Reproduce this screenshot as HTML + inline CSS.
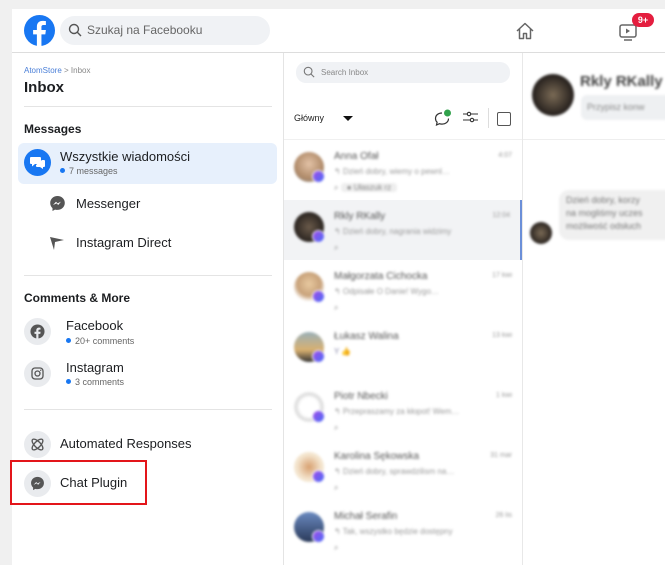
<!DOCTYPE html>
<html><head><meta charset="utf-8"><style>
*{box-sizing:border-box;margin:0;padding:0}
body{width:665px;height:565px;overflow:hidden;background:#f0f0f0;font-family:"Liberation Sans",sans-serif;position:relative}
.abs{position:absolute}
.panel{position:absolute;left:12px;top:9px;width:653px;height:556px;background:#fff}
.top{position:absolute;left:12px;top:9px;width:653px;height:44px;border-bottom:1px solid #ddd;background:#fff}
.blur{filter:blur(1.2px)}
.row{position:absolute;left:284px;width:238px;height:60px}
.av{position:absolute;left:10px;top:12px;width:30px;height:30px;border-radius:50%}
.badge{position:absolute;left:28px;top:30px;width:13px;height:13px;border-radius:50%;background:linear-gradient(135deg,#a04de8,#4a6cf7);border:1.5px solid #fff}
.nm{position:absolute;left:50px;top:11px;font-size:10px;color:#555}
.tm{position:absolute;right:10px;top:12px;font-size:7px;color:#999}
.sn{position:absolute;left:50px;top:27px;font-size:8px;color:#999}
.ic{position:absolute;left:50px;top:43px;font-size:8px;color:#888}
.circ{position:absolute;width:27px;height:27px;border-radius:50%;background:#e9ebee}
.lbl{position:absolute;font-size:13px;color:#1c1e21}
.sub{position:absolute;font-size:9px;color:#666}
.dot{display:inline-block;width:5px;height:5px;border-radius:50%;background:#1877f2;margin-right:4px;vertical-align:1px}
</style></head><body>
<div class="panel"></div>
<div class="top">
 <svg class="abs" style="left:12px;top:6px" width="31" height="31" viewBox="0 0 32 32"><circle cx="16" cy="16" r="16" fill="#1877f2"/><path d="M18 32V20h4l.6-4.5H18v-3c0-1.3.4-2.2 2.2-2.2h2.4V6.3c-.4 0-1.8-.2-3.5-.2-3.5 0-5.8 2.1-5.8 6V15.5H9.4V20h3.9v12z" fill="#fff"/></svg>
 <div class="abs" style="left:48px;top:7px;width:210px;height:29px;border-radius:15px;background:#f0f2f5"></div>
 <svg class="abs" style="left:56px;top:14px" width="14" height="14" viewBox="0 0 14 14"><circle cx="6" cy="6" r="4.5" fill="none" stroke="#555" stroke-width="1.4"/><path d="M9.3 9.3L13 13" stroke="#555" stroke-width="1.4"/></svg>
 <div class="abs" style="left:75px;top:14px;font-size:12px;color:#666">Szukaj na Facebooku</div>
 <svg class="abs" style="left:503px;top:12px" width="20" height="20" viewBox="0 0 20 20"><path d="M2 10L10 2.5 18 10M4.5 8v9.5h4v-5h3v5h4V8" fill="none" stroke="#666" stroke-width="1.5" stroke-linejoin="round"/></svg>
 <svg class="abs" style="left:606px;top:13px" width="20" height="20" viewBox="0 0 20 20"><rect x="2" y="3" width="16" height="12" rx="2" fill="none" stroke="#666" stroke-width="1.5"/><path d="M8 6.5v5l4-2.5z" fill="#666"/><path d="M6 18h8" stroke="#666" stroke-width="1.5"/></svg>
 <div class="abs" style="left:620px;top:4px;width:22px;height:14px;border-radius:7px;background:#e41e3f;color:#fff;font-size:9px;font-weight:bold;text-align:center;line-height:14px">9+</div>
</div>
<div class="abs" style="left:283px;top:53px;width:1px;height:512px;background:#e4e4e4"></div>
<div class="abs" style="left:24px;top:66px;font-size:8px;color:#888"><span style="color:#4a7fd8">AtomStore</span> &gt; Inbox</div>
<div class="abs" style="left:24px;top:79px;font-size:15px;font-weight:bold;color:#1c1e21">Inbox</div>
<div class="abs" style="left:24px;top:106px;width:248px;height:1px;background:#e4e4e4"></div>
<div class="abs" style="left:24px;top:122px;font-size:12px;font-weight:bold;color:#1c1e21">Messages</div>
<div class="abs" style="left:18px;top:143px;width:259px;height:41px;border-radius:6px;background:#e7f0fc"></div>
<div class="abs" style="left:24px;top:149px;width:27px;height:27px;border-radius:50%;background:#1877f2"></div>
<svg class="abs" style="left:29px;top:154px" width="17" height="17" viewBox="0 0 17 17"><path d="M2 3h9a1 1 0 011 1v5a1 1 0 01-1 1H6l-3 2.5V10H2a1 1 0 01-1-1V4a1 1 0 011-1z" fill="#fff"/><path d="M13 6h2a1 1 0 011 1v5a1 1 0 01-1 1h-1v2l-3-2H8a1 1 0 01-1-1v-1" fill="#fff"/></svg>
<div class="lbl" style="left:60px;top:149px">Wszystkie wiadomości</div>
<div class="sub" style="left:60px;top:166px"><span class="dot"></span>7 messages</div>
<svg class="abs" style="left:49px;top:195px" width="17" height="17" viewBox="0 0 17 17"><path d="M8.5 1C4.4 1 1.2 4 1.2 8c0 2.1.9 3.9 2.3 5.1V16l2.5-1.4c.8.2 1.6.3 2.5.3 4.1 0 7.3-3 7.3-7S12.6 1 8.5 1z" fill="#555"/><path d="M4 10l3-3.2 1.6 1.6L12 6.6 9.2 10 7.6 8.4z" fill="#fff"/></svg>
<div class="lbl" style="left:76px;top:196px">Messenger</div>
<svg class="abs" style="left:49px;top:235px" width="16" height="16" viewBox="0 0 16 16"><path d="M1 2l14 3-9 2-1 8z" fill="#555"/></svg>
<div class="lbl" style="left:76px;top:235px">Instagram Direct</div>
<div class="abs" style="left:24px;top:275px;width:248px;height:1px;background:#e4e4e4"></div>
<div class="abs" style="left:24px;top:291px;font-size:12px;font-weight:bold;color:#1c1e21">Comments &amp; More</div>
<div class="circ" style="left:24px;top:318px"></div>
<svg class="abs" style="left:30px;top:324px" width="15" height="15" viewBox="0 0 16 16"><circle cx="8" cy="8" r="7.5" fill="#555"/><path d="M9 16v-5.5h2l.3-2.2H9V7c0-.6.2-1 1-1h1.2V4c-.3 0-.9-.1-1.7-.1C7.8 3.9 6.7 5 6.7 6.8v1.5H4.8v2.2h1.9V16z" fill="#e9ebee"/></svg>
<div class="lbl" style="left:66px;top:318px">Facebook</div>
<div class="sub" style="left:66px;top:336px"><span class="dot"></span>20+ comments</div>
<div class="circ" style="left:24px;top:360px"></div>
<svg class="abs" style="left:31px;top:367px" width="13" height="13" viewBox="0 0 13 13"><rect x="1" y="1" width="11" height="11" rx="3" fill="none" stroke="#555" stroke-width="1.3"/><circle cx="6.5" cy="6.5" r="2.5" fill="none" stroke="#555" stroke-width="1.3"/><circle cx="9.7" cy="3.3" r=".7" fill="#555"/></svg>
<div class="lbl" style="left:66px;top:360px">Instagram</div>
<div class="sub" style="left:66px;top:377px"><span class="dot"></span>3 comments</div>
<div class="abs" style="left:24px;top:409px;width:248px;height:1px;background:#e4e4e4"></div>
<div class="circ" style="left:24px;top:431px"></div>
<svg class="abs" style="left:29px;top:436px" width="17" height="17" viewBox="0 0 17 17" fill="none" stroke="#555" stroke-width="1.3"><ellipse cx="8.5" cy="8.5" rx="7" ry="3" transform="rotate(45 8.5 8.5)"/><ellipse cx="8.5" cy="8.5" rx="7" ry="3" transform="rotate(-45 8.5 8.5)"/></svg>
<div class="lbl" style="left:60px;top:436px">Automated Responses</div>
<div class="circ" style="left:24px;top:470px"></div>
<svg class="abs" style="left:30px;top:476px" width="15" height="15" viewBox="0 0 17 17"><path d="M8.5 1C4.4 1 1.2 4 1.2 8c0 2.1.9 3.9 2.3 5.1V16l2.5-1.4c.8.2 1.6.3 2.5.3 4.1 0 7.3-3 7.3-7S12.6 1 8.5 1z" fill="#555"/><path d="M4 10l3-3.2 1.6 1.6L12 6.6 9.2 10 7.6 8.4z" fill="#e9ebee"/></svg>
<div class="lbl" style="left:60px;top:475px">Chat Plugin</div>
<div class="abs" style="left:10px;top:460px;width:137px;height:45px;border:2px solid #e3151a"></div>
<div class="abs" style="left:522px;top:53px;width:1px;height:512px;background:#e8e8e8"></div>
<div class="abs" style="left:296px;top:62px;width:214px;height:21px;border-radius:10px;background:#f0f2f5"></div>
<svg class="abs" style="left:303px;top:66px" width="12" height="12" viewBox="0 0 14 14"><circle cx="6" cy="6" r="4.5" fill="none" stroke="#777" stroke-width="1.3"/><path d="M9.3 9.3L13 13" stroke="#777" stroke-width="1.3"/></svg>
<div class="abs" style="left:321px;top:68px;font-size:8px;color:#888">Search Inbox</div>
<div class="abs" style="left:294px;top:113px;font-size:9px;color:#222">Główny</div>
<div class="abs" style="left:343px;top:116px;width:0;height:0;border-left:5px solid transparent;border-right:5px solid transparent;border-top:5px solid #111"></div>
<svg class="abs" style="left:433px;top:108px" width="20" height="20" viewBox="0 0 20 20"><path d="M9 5C5 5 2.5 7.5 2.5 10.5c0 1.5.6 2.8 1.6 3.7L3.5 17l3-1.3c.8.3 1.6.4 2.5.4 4 0 6.5-2.5 6.5-5.6" fill="none" stroke="#333" stroke-width="1.2"/><circle cx="14.5" cy="5" r="3.5" fill="#31a24c"/></svg>
<svg class="abs" style="left:462px;top:110px" width="17" height="14" viewBox="0 0 17 14" stroke="#333" stroke-width="1.1" fill="none"><path d="M1 4h4M9 4h7M1 10h7M12 10h4"/><circle cx="7" cy="4" r="1.7"/><circle cx="10" cy="10" r="1.7"/></svg>
<div class="abs" style="left:488px;top:108px;width:1px;height:20px;background:#ddd"></div>
<div class="abs" style="left:497px;top:112px;width:14px;height:14px;border:1px solid #555;border-radius:2px"></div>
<div class="abs" style="left:284px;top:139px;width:238px;height:1px;background:#f0f0f0"></div>
<div class="row" style="top:140px"><div class="av blur" style="background:radial-gradient(circle at 50% 40%,#e3c2a6,#b08b6a 60%,#8a8a8a)"></div><div class="badge blur"></div><div class="nm blur">Anna Ofał</div><div class="tm blur">4:07</div><div class="sn blur">↰ Dzień dobry, wiemy o pewnl…</div><div class="ic blur">⌕ <span style="background:#eee;padding:0 6px;border-radius:3px">● Ułaszuk rz</span></div></div>
<div class="row" style="top:200px;background:#f2f3f5;border-right:2px solid #6b8fd8"><div class="av blur" style="background:radial-gradient(circle,#6a5a4a,#2a2420 70%)"></div><div class="badge blur"></div><div class="nm blur">Rkly RKally</div><div class="tm blur">12:04</div><div class="sn blur">↰ Dzień dobry, nagrania widzimy</div><div class="ic blur">⌕</div></div>
<div class="row" style="top:260px"><div class="av blur" style="background:radial-gradient(circle at 50% 40%,#e8c9a0,#c8a27a 50%,#fff 75%)"></div><div class="badge blur"></div><div class="nm blur">Małgorzata Cichocka</div><div class="tm blur">17 kwi</div><div class="sn blur">↰ Odpisałe O Danie! Wygo…</div><div class="ic blur">⌕</div></div>
<div class="row" style="top:320px"><div class="av blur" style="background:linear-gradient(#9ab0b8,#d8b070 60%,#333)"></div><div class="badge blur"></div><div class="nm blur">Łukasz Walina</div><div class="tm blur">13 kwi</div><div class="sn blur" style="color:#88a">Y 👍</div></div>
<div class="row" style="top:380px"><div class="av blur" style="background:radial-gradient(circle,#fff 45%,#ddd 60%,#fff)"></div><div class="badge blur"></div><div class="nm blur">Piotr Nbecki</div><div class="tm blur">1 kwi</div><div class="sn blur">↰ Przepraszamy za kłopot! Wem…</div><div class="ic blur">⌕</div></div>
<div class="row" style="top:440px"><div class="av blur" style="background:radial-gradient(circle,#d8a070,#f4e6d0 60%)"></div><div class="badge blur"></div><div class="nm blur">Karolina Sękowska</div><div class="tm blur">31 mar</div><div class="sn blur">↰ Dzień dobry, sprawdzilism na…</div><div class="ic blur">⌕</div></div>
<div class="row" style="top:500px"><div class="av blur" style="background:linear-gradient(#6a8ac0,#2a3a5a)"></div><div class="badge blur"></div><div class="nm blur">Michał Serafin</div><div class="tm blur">26 lis</div><div class="sn blur">↰ Tak, wszystko będzie dostępny</div><div class="ic blur">⌕</div></div>
<div class="abs" style="left:523px;top:139px;width:142px;height:1px;background:#eee"></div>
<div class="abs blur" style="left:532px;top:74px;width:42px;height:42px;border-radius:50%;background:radial-gradient(circle,#7a6a55,#2a2420 65%,#111)"></div>
<div class="abs blur" style="left:580px;top:73px;font-size:15px;font-weight:bold;color:#444">Rkly RKally</div>
<div class="abs blur" style="left:581px;top:95px;width:90px;height:25px;border-radius:6px;background:#eef0f2;font-size:9px;color:#888;padding:7px 6px">Przypisz konw</div>
<div class="abs blur" style="left:559px;top:190px;width:120px;height:50px;border-radius:10px;background:#f0f0f0;font-size:9px;color:#777;padding:4px 7px;line-height:13px">Dzień dobry, korzy<br>na mogliśmy uczes<br>możliwość odsłuch</div>
<div class="abs blur" style="left:530px;top:222px;width:22px;height:22px;border-radius:50%;background:radial-gradient(circle,#7a6a55,#2a2420 70%)"></div>
</body></html>
